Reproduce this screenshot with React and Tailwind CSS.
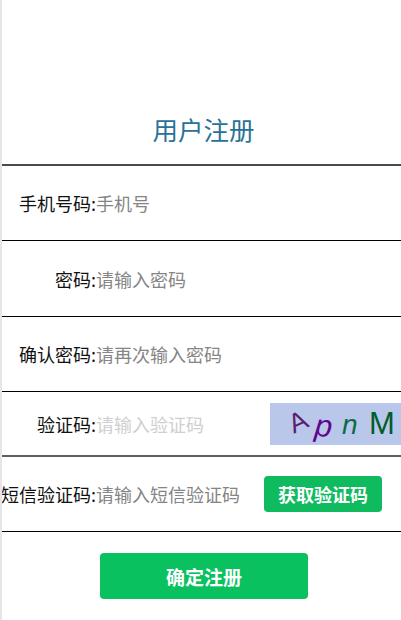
const font = { fontFamily: '"Noto Sans CJK SC", "Liberation Sans", sans-serif' };

function Row({ label, placeholder, h, border, light, children }) {
  return (
    <div className={`flex items-center ${h} ${border}`}>
      <label className="flex w-[94px] shrink-0 justify-end text-[18px] leading-none whitespace-nowrap text-[#111]">{label}:</label>
      <input
        placeholder={placeholder}
        className={`min-w-0 flex-1 bg-transparent text-[18px] leading-none outline-none ${light ? "placeholder:text-[#cfcfcf]" : "placeholder:text-[#858585]"}`}
      />
      {children}
    </div>
  );
}

export default function App() {
  return (
    <div style={font} className="h-[620px] w-[401px] overflow-hidden border-l-2 border-l-[#e6e6e6] bg-white">
      <div className="flex h-[166px] items-end justify-center border-b-2 border-[#4a4a4a] pb-[23px]">
        <h1 className="pl-[4px] text-[25.5px] leading-none font-normal text-[#2a7199]">用户注册</h1>
      </div>
      <Row label="手机号码" placeholder="手机号" h="h-[75px]" border="border-b border-black" />
      <Row label="密码" placeholder="请输入密码" h="h-[76px]" border="border-b border-black" />
      <Row label="确认密码" placeholder="请再次输入密码" h="h-[75px]" border="border-b border-black" />
      <Row label="验证码" placeholder="请输入验证码" h="h-[65px]" border="border-b-2 border-[#5f5f5f]" light>
        <div style={{ fontFamily: '"Liberation Sans", sans-serif' }} className="flex h-[42px] w-[131px] shrink-0 items-center bg-[#b9c8ea] pl-[19px] leading-none">
          <span className="-mt-[6px] w-[26px] -rotate-[25deg] text-[27px] text-[#5a1f6e]">A</span>
          <span className="mt-[5px] w-[27px] rotate-[6deg] text-[31px] italic text-[#62058c]">p</span>
          <span className="mt-[2px] w-[27px] text-[28px] italic text-[#0d6b45]">n</span>
          <span className="text-[31px] text-[#035c2c]">M</span>
        </div>
      </Row>
      <Row label="短信验证码" placeholder="请输入短信验证码" h="h-[75px]" border="border-b border-black">
        <button className="mr-[19px] flex h-[36px] w-[118px] shrink-0 items-center justify-center rounded-[4px] bg-[#10bb5f] text-[18px] leading-none font-bold text-white">
          获取验证码
        </button>
      </Row>
      <div className="flex justify-center pt-[21px] pl-[5px]">
        <button className="flex h-[46px] w-[208px] items-center justify-center rounded-[4px] bg-[#0ac15f] text-[19px] leading-none font-bold text-white">
          确定注册
        </button>
      </div>
    </div>
  );
}
